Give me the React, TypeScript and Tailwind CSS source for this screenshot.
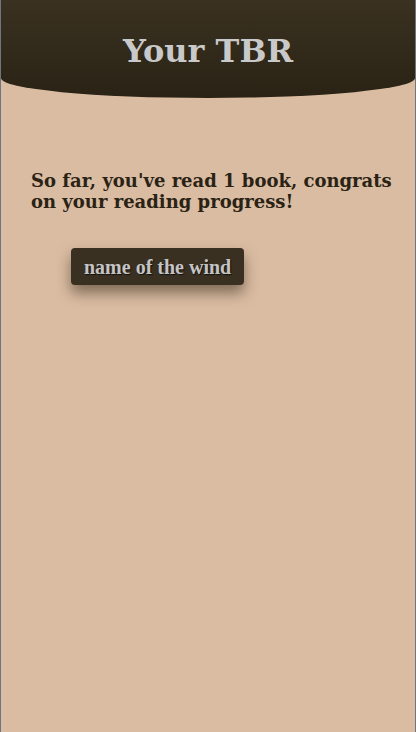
export default function App() {
  return (
    <div className="min-h-[732px] w-[416px] border-x border-[#6f7680] bg-[#dabca2]">
      {/* Header */}
      <header className="flex h-[98px] items-start justify-center rounded-b-[50%_20px] bg-gradient-to-b from-[#3a3120] to-[#2a2315] pt-[29px]">
        <h1 className="font-['DejaVu_Serif',serif] text-[32px] font-bold leading-[44px] text-[#c9c9c9]">
          Your TBR
        </h1>
      </header>

      <main className="pl-[30px] pr-[16px] pt-[72px]">
        <p className="font-['DejaVu_Serif',serif] text-[18px] font-bold leading-[21px] text-[#2a2315]">
          So far, you've read 1 book, congrats on your reading progress!
        </p>

        <div className="mt-[36px] pl-[40px]">
          <button className="h-[37px] rounded-[4px] bg-[#393021] px-[13px] font-['Liberation_Serif',serif] text-[20px] font-bold text-[#c4c4c4] shadow-[0_8px_14px_rgba(40,30,15,0.5)] [text-shadow:1px_1px_1px_#111]">
            name of the wind
          </button>
        </div>
      </main>
    </div>
  );
}
